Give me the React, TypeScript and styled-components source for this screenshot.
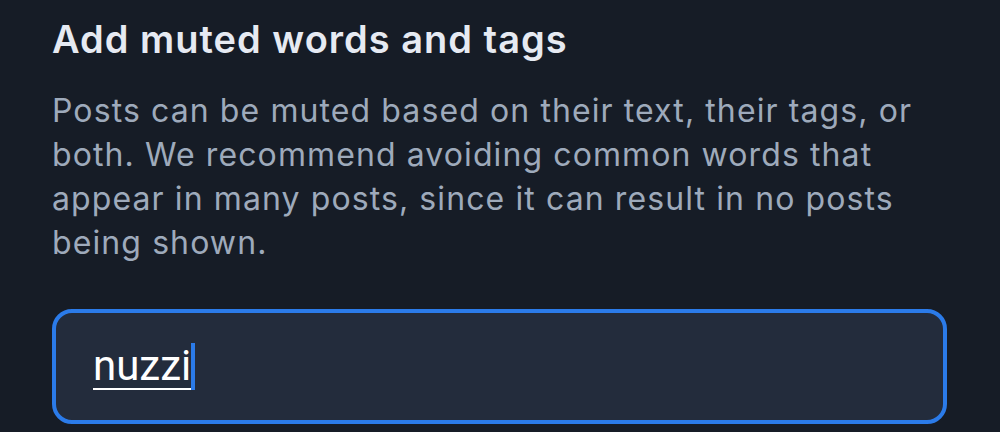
import React from "react";
import styled, { createGlobalStyle } from "styled-components";

const Global = createGlobalStyle`
  html, body {
    margin: 0;
    padding: 0;
    background: #161c26;
  }
  body {
    font-family: Inter, "Noto Sans", sans-serif;
    -webkit-font-smoothing: antialiased;
  }
`;

const Screen = styled.div`
  width: 1000px;
  height: 432px;
  box-sizing: border-box;
  padding: 17px 53px 0 52px;
  background: #161c26;
  overflow: hidden;
  display: flex;
  flex-direction: column;
`;

const Title = styled.h2`
  margin: 0;
  font-size: 38px;
  line-height: 44px;
  font-weight: 600;
  letter-spacing: 1px;
  color: #e6eaf2;
`;

const Description = styled.p`
  margin: 28px 0 0;
  font-size: 32px;
  line-height: 44px;
  font-weight: 400;
  letter-spacing: 1.1px;
  color: #9eaabb;
`;

const Field = styled.div`
  margin-top: 44px;
  height: 115px;
  box-sizing: border-box;
  border: 4px solid #2b7be9;
  border-radius: 20px;
  background: #232c3c;
  display: flex;
  align-items: center;
  padding-left: 37px;
`;

const Entry = styled.div`
  display: flex;
  align-items: flex-end;
`;

const Typed = styled.span`
  font-family: Roboto, "Noto Sans", sans-serif;
  font-size: 42px;
  line-height: 44px;
  color: #ffffff;
  border-bottom: 2px solid #ffffff;
`;

const Caret = styled.span`
  width: 4px;
  height: 47px;
  background: #2b7be9;
`;

export default function App() {
  return (
    <>
      <Global />
      <Screen>
        <Title>Add muted words and tags</Title>
        <Description>
          Posts can be muted based on their text, their tags, or both. We
          recommend avoiding common words that appear in many posts, since it
          can result in no posts being shown.
        </Description>
        <Field>
          <Entry>
            <Typed>nuzzi</Typed>
            <Caret />
          </Entry>
        </Field>
      </Screen>
    </>
  );
}
